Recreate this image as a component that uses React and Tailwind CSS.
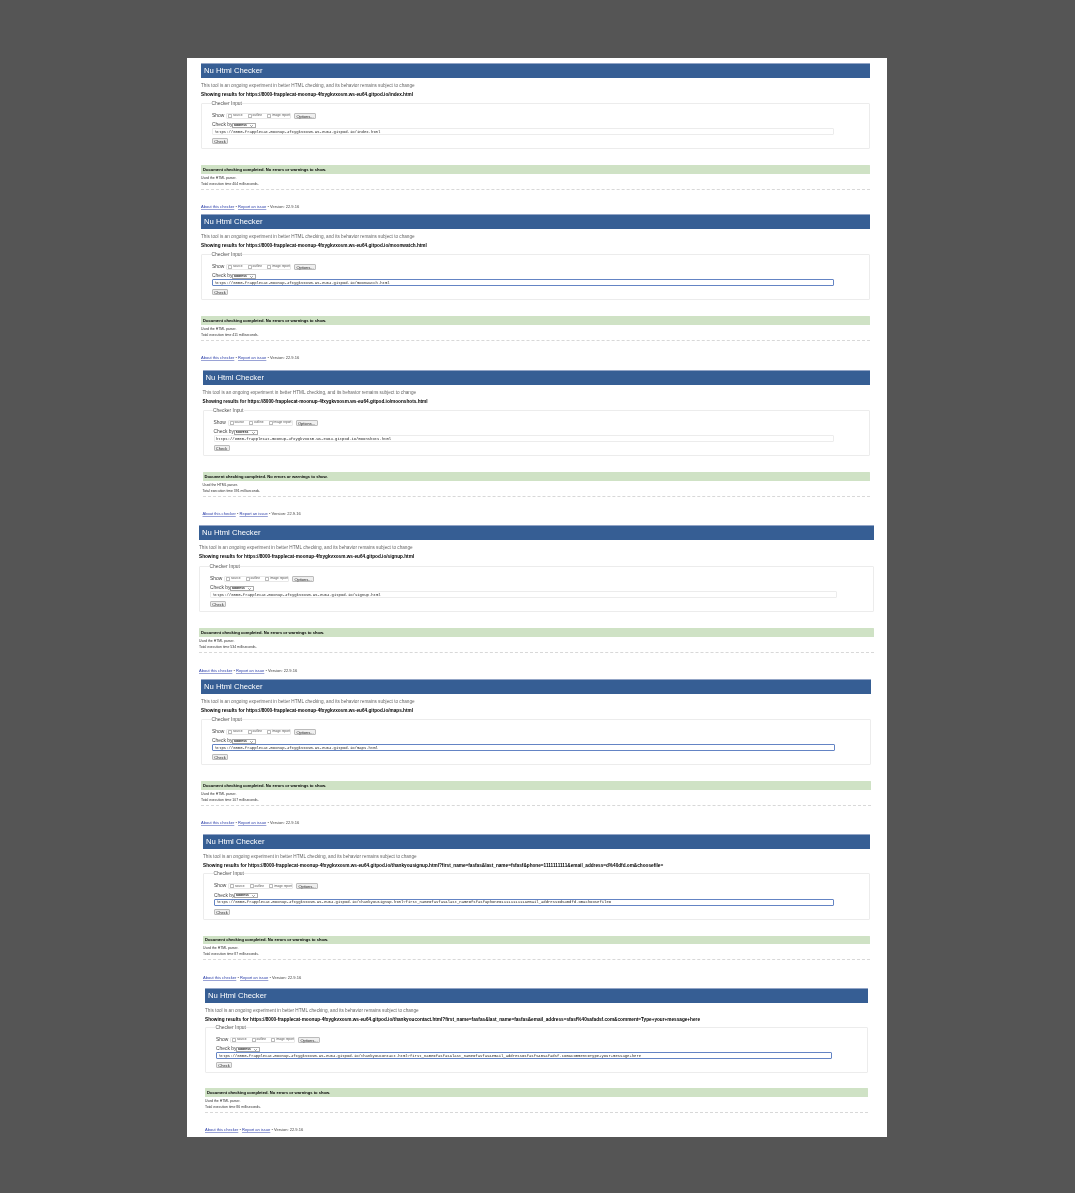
import React from "react";

const host = "https://8000-frapplecat-moonup-4fxygkvxosm.ws-eu64.gitpod.io/";

const sections = [
  { cls: "mt-[5px] ml-[14px] mr-[17px]", h: "h-[151px]", path: "index.html", time: 404, focus: false, inputW: "w-[622px]", fieldMt: "mt-[2px]", greenMt: "mt-[16px]", footMt: "mt-[15px]" },
  { cls: "ml-[14px] mr-[17px]", h: "h-[156px]", path: "moonwatch.html", time: 411, focus: true, inputW: "w-[622px]", fieldMt: "mt-[2px]", greenMt: "mt-[16px]", footMt: "mt-[15px]" },
  { cls: "ml-[15.5px] mr-[17px]", h: "h-[155px]", path: "moonshots.html", time: 391, focus: false, inputW: "w-[620.5px]", fieldMt: "mt-[2px]", greenMt: "mt-[16px]", footMt: "mt-[15px]" },
  { cls: "ml-[12px] mr-[13.5px]", h: "h-[154px]", path: "signup.html", time: 534, focus: false, inputW: "w-[627px]", fieldMt: "mt-[3px]", greenMt: "mt-[16px]", footMt: "mt-[16px]" },
  { cls: "ml-[14px] mr-[16px]", h: "h-[155px]", path: "maps.html", time: 107, focus: true, inputW: "w-[623px]", fieldMt: "mt-[2px]", greenMt: "mt-[16px]", footMt: "mt-[15px]" },
  { cls: "ml-[16px] mr-[17px]", h: "h-[154px]", path: "thankyousignup.html?first_name=fasfas&last_name=fsfasf&phone=1111111111&email_address=d%40dfd.om&choosefile=", time: 87, focus: true, inputW: "w-[620px]", fieldMt: "mt-[1.5px]", greenMt: "mt-[16px]", footMt: "mt-[15px]" },
  { cls: "ml-[18px] mr-[19px]", h: "h-[149px]", path: "thankyoucontact.html?first_name=fasfas&last_name=fasfas&email_address=sfasf%40safadsf.com&comment=Type+your+message+here", time: 86, focus: true, inputW: "w-[616px]", fieldMt: "mt-[1px]", greenMt: "mt-[15px]", footMt: "mt-[15px]" },
];

function Check({ label, cls }) {
  return (
    <label className={"flex items-center gap-[1px] text-[3.2px] text-[#555] whitespace-nowrap " + cls}>
      <input type="checkbox" className="appearance-none shrink-0 w-[4px] h-[4px] bg-white border-[0.5px] border-[#bbbbbb] rounded-[0.5px]" />
      {label}
    </label>
  );
}

function Checker({ s }) {
  const url = host + s.path;
  return (
    <section className={s.h + " " + s.cls}>
      <h1 className="h-[15px] flex items-center pl-[3px] pb-[1px] bg-[#365e94] border-t-[0.5px] border-[#93a5c6] text-white text-[7.7px] leading-none font-normal rounded-[0.5px]">
        Nu Html Checker
      </h1>
      <p className="mt-[4px] h-[7px] flex items-center text-[4.68px] text-[#666] whitespace-nowrap">
        This tool is an ongoing experiment in better HTML checking, and its behavior remains subject to change
      </p>
      <p className="mt-[2px] h-[7px] flex items-center text-[4.7px] font-bold text-black whitespace-nowrap">
        Showing results for {url}
      </p>
      <fieldset className={s.fieldMt + " h-[49px] border-[0.5px] border-[#ececec] rounded-[1px] pl-[10px] pr-[2px]"}>
        <legend className="ml-[-1px] h-[6px] pt-[1px] flex items-center px-[0.5px] text-[4.9px] text-[#555]">Checker Input</legend>
        <div className="mt-[6px] h-[7px] flex items-center text-[4.9px] text-[#444]">
          <span className="w-[14px] shrink-0 whitespace-nowrap">Show</span>
          <div className="h-[6px] w-[65px] flex items-center pl-[1px] border-[0.5px] border-[#e8e8e8] rounded-[1px]">
            <Check label="source" cls="w-[20px]" />
            <Check label="outline" cls="w-[20px]" />
            <Check label="image report" cls="" />
          </div>
          <button className="ml-[3px] h-[6px] w-[22px] bg-[#efefef] border-[0.5px] border-[#bbbbbb] rounded-[1px] text-[4px] text-[#222] whitespace-nowrap">Options...</button>
        </div>
        <div className="mt-[3px] h-[6px] flex items-center text-[4.9px] text-[#444]">
          <span className="w-[20px] shrink-0 whitespace-nowrap">Check by</span>
          <div className="relative w-[24px] h-[5px] border-[0.5px] border-[#aaaaaa] rounded-[0.5px] flex items-center">
            <select className="appearance-none w-full h-full pl-[1px] text-[3.4px] leading-none font-bold text-[#222]" defaultValue="address">
              <option>address</option>
            </select>
            <svg className="absolute right-[2px] top-[1px] w-[3px] h-[2px]" viewBox="0 0 6 4" fill="none" stroke="#222" strokeWidth="1">
              <path d="M0.5 0.5 L3 3 L5.5 0.5" />
            </svg>
          </div>
        </div>
        <input
          readOnly
          value={url}
          className={
            s.inputW +
            " block h-[7px] px-[1.5px] rounded-[1px] font-['Liberation_Mono',monospace] text-[3.9px] text-[#222] outline-none " +
            (s.focus ? "border-[0.75px] border-[#6484c4]" : "border-[0.75px] border-[#ececec]")
          }
        />
        <button className="mt-[3px] block h-[6px] w-[16px] bg-[#efefef] border-[0.5px] border-[#bbbbbb] rounded-[1px] text-[4px] text-[#222]">Check</button>
      </fieldset>
      <div className={s.greenMt + " h-[8.5px] flex items-center pl-[2px] pt-[1px] bg-[#cfe2c5] rounded-[0.5px] text-[4.1px] font-bold text-black"}>
        Document checking completed. No errors or warnings to show.
      </div>
      <p className="mt-[2.5px] h-[5px] flex items-center text-[3.45px] text-[#333]">Used the HTML parser.</p>
      <p className="mt-[1px] h-[5px] flex items-center text-[3.45px] text-[#333]">Total execution time {s.time} milliseconds.</p>
      <hr className="mt-[1.5px] border-0 border-t-[0.5px] border-dashed border-[#d8d8d8]" />
      <footer className={s.footMt + " h-[6px] flex items-center text-[4.05px] text-[#444] whitespace-pre"}>
        <a className="text-[#2a3da8] underline decoration-[#9aa3d6] decoration-[0.4px] underline-offset-[0.5px]">About this checker</a>
        <span> • </span>
        <a className="text-[#2a3da8] underline decoration-[#9aa3d6] decoration-[0.4px] underline-offset-[0.5px]">Report an issue</a>
        <span> • Version: 22.9.16</span>
      </footer>
    </section>
  );
}

export default function App() {
  return (
    <div className="min-h-[1193px] bg-[#555555] pt-[58px] font-['Liberation_Sans',Arial,sans-serif]">
      <main className="ml-[187px] w-[700px] h-[1079px] bg-white overflow-hidden">
        <div className="blur-[0.3px]">
          {sections.map((s) => (
            <Checker key={s.path} s={s} />
          ))}
        </div>
      </main>
    </div>
  );
}
